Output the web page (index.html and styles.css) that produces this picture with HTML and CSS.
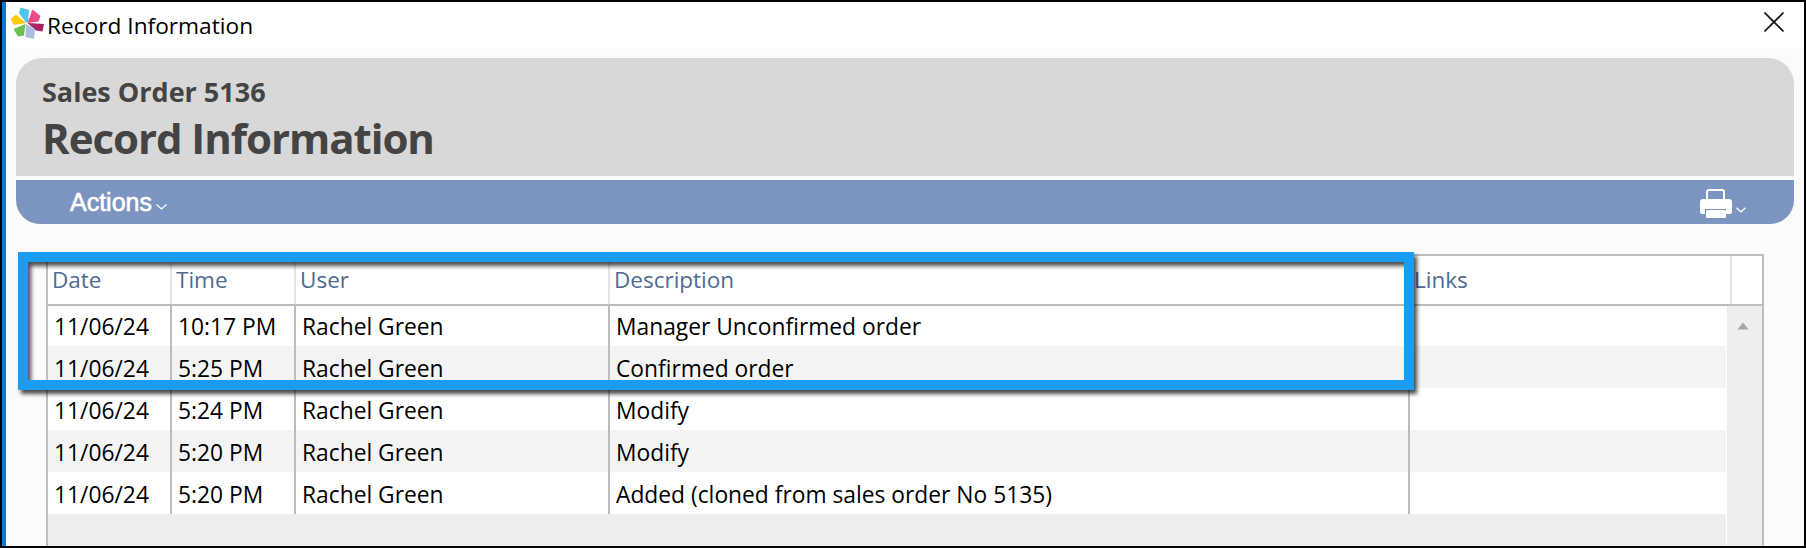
FILE: index.html
```html
<!DOCTYPE html>
<html lang="en">
<head>
  <meta charset="UTF-8">
  <title>Record Information</title>
  <link rel="stylesheet" href="styles.css">
</head>
<body>

  <div class="window">
    <div class="titlebar">
      <svg class="logo" width="34" height="34" viewBox="9 7 34 34">
        <polygon fill="#4ec4e8" points="19.5,8.5 28,11 27,23 25,23.5 18,14"/>
        <polygon fill="#ec4a86" points="31.5,10.5 39.5,17 37.5,22.5 26.5,24"/>
        <polygon fill="#a8226a" points="43,25 41.5,32.5 35,31.5 26.5,24"/>
        <polygon fill="#a9bfdd" points="25,25 34,30 33,40 24.5,38"/>
        <polygon fill="#6cc04f" points="24.5,25 23,36.5 17,37.5 12.5,30"/>
        <polygon fill="#fccc0a" points="9.5,20 15,15.5 25,24 13,26"/>
      </svg>
      <span class="window-title">Record Information</span>
      <svg class="close" width="20" height="20" viewBox="0 0 20 20">
        <path d="M0.5 0.5L19.5 19.5M19.5 0.5L0.5 19.5" stroke="#111" stroke-width="1.6" fill="none"/>
      </svg>
    </div>

    <div class="content">
      <div class="page-head">
        <div class="page-sub">Sales Order 5136</div>
        <h1 class="page-title">Record Information</h1>
      </div>

      <div class="action-bar">
        <span class="actions">Actions</span>
        <svg class="chev" width="11" height="6" viewBox="0 0 11 6">
          <path d="M0.5 0.5L5.5 5L10.5 0.5" stroke="#fff" stroke-width="1.2" fill="none"/>
        </svg>
        <svg class="printer" width="32" height="29" viewBox="0 0 32 29">
          <path fill="#fff" fill-rule="evenodd" d="M6 3a3 3 0 0 1 3-3h13a3 3 0 0 1 3 3v7h4a3 3 0 0 1 3 3v10a2 2 0 0 1-2 2h-4v-5H5v5H2a2 2 0 0 1-2-2V13a3 3 0 0 1 3-3h3zM8 3v7h15V3a1 1 0 0 0-1-1H9a1 1 0 0 0-1 1z"/>
          <rect fill="#fff" x="6" y="21" width="20" height="8" rx="1.5"/>
        </svg>
        <svg class="chev chev-print" width="10" height="6" viewBox="0 0 11 6">
          <path d="M0.5 0.5L5.5 5L10.5 0.5" stroke="#fff" stroke-width="1.4" fill="none"/>
        </svg>
      </div>

      <div class="grid">
        <div class="grid-head">
          <div class="hcell col-date">Date</div>
          <div class="hcell col-time">Time</div>
          <div class="hcell col-user">User</div>
          <div class="hcell col-desc">Description</div>
          <div class="hcell col-links-head">Links</div>
        </div>
        <div class="grid-body">
          <div class="rows">
            <div class="row">
              <div class="cell col-date">11/06/24</div>
              <div class="cell col-time">10:17 PM</div>
              <div class="cell col-user">Rachel Green</div>
              <div class="cell col-desc">Manager Unconfirmed order</div>
            </div>
            <div class="row">
              <div class="cell col-date">11/06/24</div>
              <div class="cell col-time">5:25 PM</div>
              <div class="cell col-user">Rachel Green</div>
              <div class="cell col-desc">Confirmed order</div>
            </div>
            <div class="row">
              <div class="cell col-date">11/06/24</div>
              <div class="cell col-time">5:24 PM</div>
              <div class="cell col-user">Rachel Green</div>
              <div class="cell col-desc">Modify</div>
            </div>
            <div class="row">
              <div class="cell col-date">11/06/24</div>
              <div class="cell col-time">5:20 PM</div>
              <div class="cell col-user">Rachel Green</div>
              <div class="cell col-desc">Modify</div>
            </div>
            <div class="row">
              <div class="cell col-date">11/06/24</div>
              <div class="cell col-time">5:20 PM</div>
              <div class="cell col-user">Rachel Green</div>
              <div class="cell col-desc">Added (cloned from sales order No 5135)</div>
            </div>
          </div>
          <div class="scrollbar">
            <svg width="12" height="8" viewBox="0 0 12 8"><path d="M6 0.5L11.5 7.5H0.5z" fill="#a6a6a6"/></svg>
          </div>
        </div>
      </div>
    </div>

    <div class="callout"></div>
  </div>

</body>
</html>
```

FILE: styles.css
```css
html, body {
  margin: 0;
  height: 100%;
}
body {
  background-color: #fbfbfb;
  font-family: "Open Sans", "Noto Sans", sans-serif;
  overflow: hidden;
}
.window {
  position: relative;
  box-sizing: border-box;
  height: 548px;
  border: 2px solid #000;
  display: flex;
  flex-direction: column;
  overflow: hidden;
}
.window::before {
  content: "";
  position: absolute;
  left: 0;
  top: 0;
  bottom: 0;
  width: 4px;
  background-color: #0a78d4;
}
.titlebar {
  flex: none;
  height: 46px;
  background-color: #fff;
  display: flex;
  align-items: center;
  padding-left: 8px;
  padding-right: 20px;
}
.logo {
  flex: none;
  margin-top: -4px;
}
.window-title {
  margin-left: 3px;
  font-size: 22.7px;
  color: #000;
}
.close {
  margin-left: auto;
  margin-top: -6px;
}
.content {
  flex: 1;
  min-height: 0;
  display: flex;
  flex-direction: column;
  padding: 10px 10px 0 14px;
  background-color: #fbfbfb;
}
.page-head {
  flex: none;
  box-sizing: border-box;
  height: 118px;
  padding: 16px 0 0 26px;
  background-color: #d8d8d8;
  border-radius: 26px 26px 0 0;
  color: #444;
}
.page-sub {
  font-size: 27px;
  font-weight: 700;
  line-height: 36px;
}
.page-title {
  margin: 2px 0 0 0;
  font-size: 42px;
  font-weight: 700;
  line-height: 52px;
  letter-spacing: -1.05px;
}
.action-bar {
  flex: none;
  height: 44px;
  margin-top: 4px;
  background-color: #7b94c0;
  border-radius: 0 0 24px 24px;
  display: flex;
  align-items: center;
  padding-left: 54px;
  padding-right: 48px;
}
.actions {
  font-family: "Liberation Sans", Arial, sans-serif;
  font-size: 25px;
  color: #fff;
  -webkit-text-stroke: 0.6px #fff;
}
.chev {
  margin-left: 4px;
  margin-top: 10px;
}
.printer {
  margin-left: auto;
  margin-top: 2px;
}
.chev-print {
  margin-top: 16px;
}
.grid {
  flex: 1;
  min-height: 0;
  margin: 30px 30px 0 30px;
  border: 2px solid #bdbdbd;
  border-bottom: 0;
  background-color: #fff;
  display: flex;
  flex-direction: column;
}
.grid-head {
  flex: none;
  height: 48px;
  display: flex;
  border-bottom: 2px solid #bdbdbd;
}
.hcell {
  box-sizing: border-box;
  flex: none;
  padding-left: 4px;
  padding-top: 8px;
  font-size: 22.5px;
  color: #4f6a90;
  border-right: 2px solid #e4e4e4;
}
.col-date { width: 124px; }
.col-time { width: 124px; }
.col-user { width: 314px; }
.col-desc { width: 800px; border-right: 2px solid #bdbdbd; }
.hcell.col-desc { border-right-color: #e4e4e4; }
.col-links-head { width: 322px; }
.grid-body {
  flex: 1;
  min-height: 0;
  display: flex;
}
.rows {
  flex: none;
  width: 1678px;
  background-color: #eee;
}
.row {
  height: 42px;
  display: flex;
  background-color: #fff;
}
.row:nth-child(even) {
  background-color: #f4f4f4;
}
.row:first-child {
  height: 40px;
}
.cell {
  box-sizing: border-box;
  flex: none;
  padding-left: 6px;
  padding-top: 2px;
  line-height: 42px;
  font-size: 22.8px;
  color: #000;
  border-right: 2px solid #bdbdbd;
}
.row:first-child .cell {
  padding-top: 1px;
  line-height: 40px;
}
.scrollbar {
  flex: 1;
  margin-left: 1px;
  padding-right: 3px;
  background-color: #eee;
  display: flex;
  justify-content: center;
  padding-top: 16px;
}
.scrollbar svg {
  display: block;
}
/* annotation drawn on top of the screenshot */
.callout {
  position: absolute;
  left: 16px;
  top: 250px;
  width: 1396px;
  height: 138px;
  box-sizing: border-box;
  border: 10px solid #1a9bf4;
  box-shadow: 3px 4px 4px rgba(0, 0, 0, 0.7), inset 3px 4px 4px rgba(0, 0, 0, 0.7);
}
```
